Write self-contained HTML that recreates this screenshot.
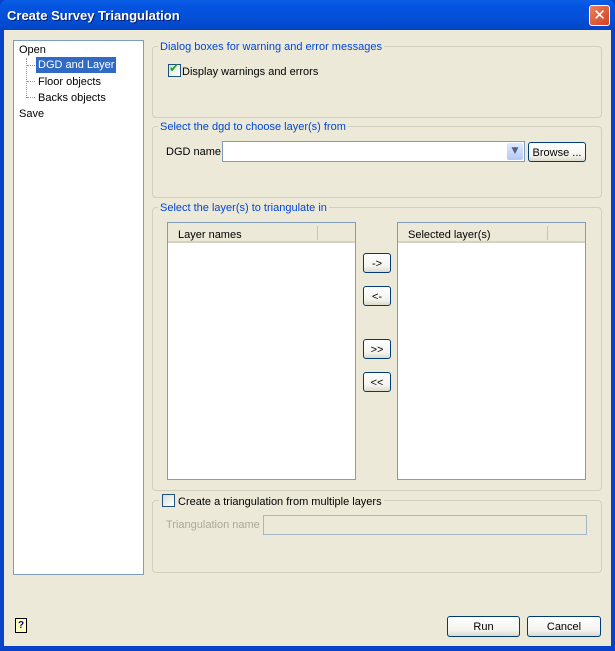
<!DOCTYPE html>
<html><head><style>
*{box-sizing:border-box;margin:0;padding:0}
body{width:615px;height:651px;overflow:hidden;font-family:"Liberation Sans",Arial,sans-serif;font-size:11px;color:#000;position:relative;background:#0842c8}
.a{position:absolute}
#title{left:0;top:0;width:615px;height:30px;background:linear-gradient(#0a5fe6,#0554e0 20%,#0350d8 60%,#0245c6);border-radius:7px 7px 0 0}
#title span{position:absolute;left:7px;top:8px;color:#fff;font-weight:bold;font-size:13px;text-shadow:1px 1px #0a1e6e}
#close{left:589px;top:5px;width:21px;height:21px;background:linear-gradient(135deg,#e9805e,#d34020);border:1px solid #fff;border-radius:3px;color:#fff;font-weight:bold;font-size:15px;text-align:center;line-height:18px;font-family:"DejaVu Sans",sans-serif}
#body{left:4px;top:30px;width:607px;height:616px;background:#ece9d8}
.grp{border:1px solid #d0d0bf;border-radius:4px}
.leg{background:#ece9d8;color:#0046d5;padding:0 2px;white-space:nowrap}
.btn{border:1px solid #003c74;border-radius:3px;background:linear-gradient(#fff,#f4f3ee 70%,#dcd9cc);text-align:center}
.cb{width:13px;height:13px;border:1px solid #1c5180;background:linear-gradient(135deg,#dcdcd4,#fff)}
.list{background:#fff;border:1px solid #7f9db9}
.hdr{height:20px;background:#ece9d8;border-bottom:2px solid #d6d2c2;position:relative}
</style></head><body>
<div id="title" class="a"><span>Create Survey Triangulation</span></div>
<div id="close" class="a">✕</div>
<div id="body" class="a"></div>

<div class="a" style="left:13px;top:40px;width:131px;height:535px;background:#fff;border:1px solid #7f9db9"></div>
<div class="a" style="left:19px;top:44px">Open</div>
<div class="a" style="left:26px;top:58px;width:1px;height:40px;border-left:1px dotted #999"></div>
<div class="a" style="left:27px;top:65px;width:8px;border-top:1px dotted #999"></div>
<div class="a" style="left:27px;top:81px;width:8px;border-top:1px dotted #999"></div>
<div class="a" style="left:27px;top:97px;width:8px;border-top:1px dotted #999"></div>
<div class="a" style="left:36px;top:57px;height:16px;padding:2px 2px;background:#316ac5;color:#fff;outline:1px dotted #fff">DGD and Layer</div>
<div class="a" style="left:38px;top:76px">Floor objects</div>
<div class="a" style="left:38px;top:92px">Backs objects</div>
<div class="a" style="left:19px;top:108px">Save</div>

<div class="a grp" style="left:152px;top:46px;width:450px;height:72px"></div>
<div class="a leg" style="left:158px;top:41px">Dialog boxes for warning and error messages</div>
<div class="a cb" style="left:168px;top:64px"></div>
<div class="a" style="left:169px;top:61px;color:#21a121;font-weight:bold;font-size:12px;font-family:'DejaVu Sans',sans-serif">✔</div>
<div class="a" style="left:182px;top:66px">Display warnings and errors</div>

<div class="a grp" style="left:152px;top:126px;width:450px;height:72px"></div>
<div class="a leg" style="left:158px;top:121px">Select the dgd to choose layer(s) from</div>
<div class="a" style="left:166px;top:146px">DGD name</div>
<div class="a" style="left:222px;top:141px;width:303px;height:21px;background:#fff;border:1px solid #7f9db9"></div>
<div class="a" style="left:507px;top:143px;width:16px;height:17px;background:linear-gradient(#e1eafe,#b4c8f6);border-radius:2px;color:#4d6185;text-align:center;font-size:9px;line-height:17px;font-family:'DejaVu Sans',sans-serif">▼</div>
<div class="a btn" style="left:528px;top:142px;width:58px;height:20px;line-height:20px">Browse ...</div>

<div class="a grp" style="left:152px;top:207px;width:450px;height:284px"></div>
<div class="a leg" style="left:158px;top:202px">Select the layer(s) to triangulate in</div>
<div class="a list" style="left:167px;top:222px;width:189px;height:258px"><div class="hdr"><span style="position:absolute;left:10px;top:6px">Layer names</span><span style="position:absolute;left:149px;top:3px;height:14px;border-left:1px solid #c8c5b5"></span></div></div>
<div class="a list" style="left:397px;top:222px;width:189px;height:258px"><div class="hdr"><span style="position:absolute;left:10px;top:6px">Selected layer(s)</span><span style="position:absolute;left:149px;top:3px;height:14px;border-left:1px solid #c8c5b5"></span></div></div>
<div class="a btn" style="left:363px;top:253px;width:28px;height:20px;line-height:20px">-&gt;</div>
<div class="a btn" style="left:363px;top:286px;width:28px;height:20px;line-height:20px">&lt;-</div>
<div class="a btn" style="left:363px;top:339px;width:28px;height:20px;line-height:20px">&gt;&gt;</div>
<div class="a btn" style="left:363px;top:372px;width:28px;height:20px;line-height:20px">&lt;&lt;</div>

<div class="a grp" style="left:152px;top:500px;width:450px;height:73px"></div>
<div class="a leg" style="left:159px;top:494px;width:225px;height:14px"></div>
<div class="a cb" style="left:162px;top:494px"></div>
<div class="a" style="left:178px;top:496px">Create a triangulation from multiple layers</div>
<div class="a" style="left:166px;top:519px;color:#aca899">Triangulation name</div>
<div class="a" style="left:263px;top:515px;width:324px;height:20px;border:1px solid #a5b6c6"></div>

<div class="a" style="left:15px;top:618px;width:12px;height:15px;background:#ffffc0;border:1px solid #000;font-weight:bold;color:#0000a0;font-size:10px;text-align:center;line-height:13px">?</div>
<div class="a btn" style="left:447px;top:616px;width:73px;height:21px;line-height:21px">Run</div>
<div class="a btn" style="left:527px;top:616px;width:74px;height:21px;line-height:21px">Cancel</div>
</body></html>
